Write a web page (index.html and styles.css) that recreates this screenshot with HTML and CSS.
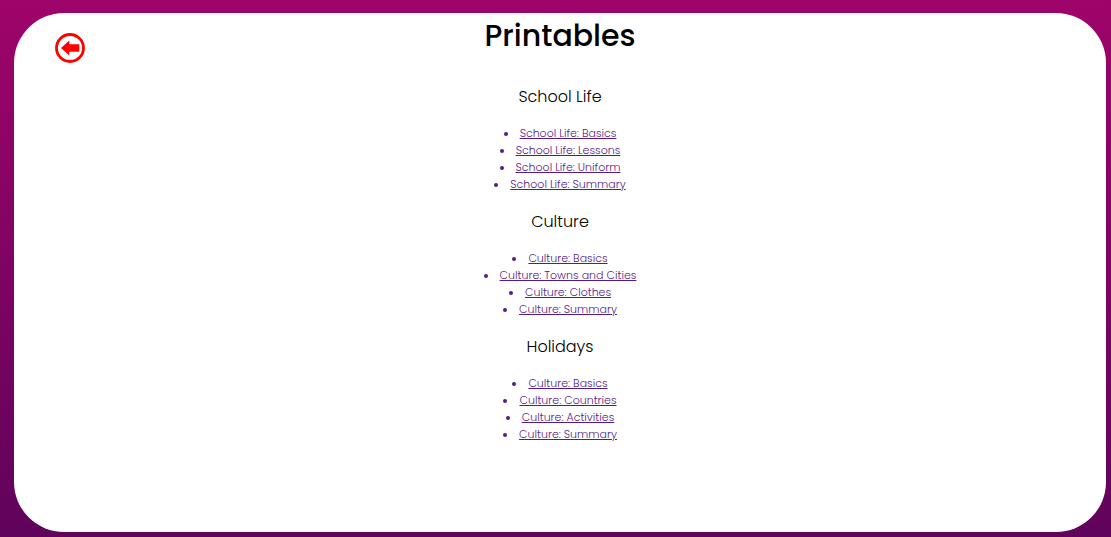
FILE: index.html
```html
<!DOCTYPE html>
<html lang="en">
<head>
<meta charset="utf-8">
<title>Printables</title>
<link rel="stylesheet" href="styles.css">
</head>
<body>
<main class="card">
  <a class="back" href="#back" aria-label="Back">
    <svg viewBox="0 0 30 30" aria-hidden="true">
      <circle cx="15" cy="15" r="13.5" fill="none" stroke="#f00" stroke-width="2.8"/>
      <path d="M6 15 14.3 7.5V11.2H24.3V18.8H14.3V22.5Z" fill="#f00"/>
    </svg>
  </a>
  <h1 class="title">Printables</h1>
  <section class="topic">
    <h2 class="heading">School Life</h2>
    <ul class="links">
      <li><a href="#basics">School Life: Basics</a></li>
      <li><a href="#lessons">School Life: Lessons</a></li>
      <li><a href="#uniform">School Life: Uniform</a></li>
      <li><a href="#summary">School Life: Summary</a></li>
    </ul>
  </section>
  <section class="topic">
    <h2 class="heading">Culture</h2>
    <ul class="links">
      <li><a href="#culture-basics">Culture: Basics</a></li>
      <li><a href="#towns">Culture: Towns and Cities</a></li>
      <li><a href="#clothes">Culture: Clothes</a></li>
      <li><a href="#culture-summary">Culture: Summary</a></li>
    </ul>
  </section>
  <section class="topic">
    <h2 class="heading">Holidays</h2>
    <ul class="links">
      <li><a href="#holiday-basics">Culture: Basics</a></li>
      <li><a href="#countries">Culture: Countries</a></li>
      <li><a href="#activities">Culture: Activities</a></li>
      <li><a href="#holiday-summary">Culture: Summary</a></li>
    </ul>
  </section>
</main>
</body>
</html>
```
FILE: styles.css
```css
* {
  box-sizing: border-box;
}

body {
  display: flex;
  min-height: 100vh;
  margin: 0;
  padding: 13px 5px 5px 14px;
  background: linear-gradient(#9e0469, #60035c);
  font-family: Poppins, Inter, "Open Sans", sans-serif;
  color: #000;
}

.card {
  position: relative;
  flex: 1;
  border-radius: 50px;
  background: #fff;
  text-align: center;
}

.back {
  position: absolute;
  top: 20px;
  left: 41px;
  width: 30px;
  height: 30px;
}

.back svg {
  display: block;
}

.title {
  margin: 0 0 27px;
  font-size: 30px;
  line-height: 45px;
  font-weight: 500;
}

.topic {
  margin-bottom: 17px;
}

.heading {
  margin: 0 0 16px;
  font-size: 16px;
  line-height: 24px;
  font-weight: 300;
}

.links {
  margin: 0;
  padding: 0;
  list-style: none;
  font-size: 11px;
  line-height: 17px;
  font-weight: 300;
  color: #551a8b;
}

.links li {
  display: flex;
  align-items: center;
  justify-content: center;
  gap: 12px;
}

.links li::before {
  content: "";
  width: 4px;
  height: 4px;
  border-radius: 50%;
  background: #551a8b;
}

.links a {
  color: inherit;
}
```
